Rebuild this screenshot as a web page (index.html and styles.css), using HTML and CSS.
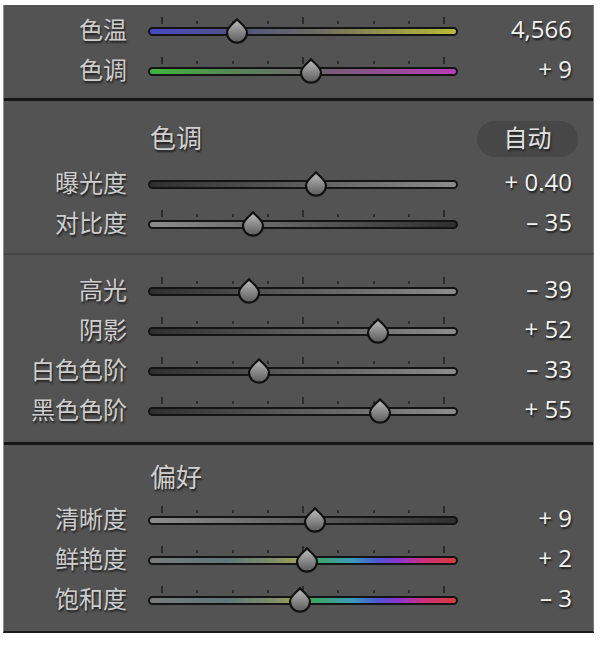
FILE: index.html
```html
<!DOCTYPE html>
<html lang="zh-CN">
<head>
    <meta charset="UTF-8">
    <title>基本调整</title>
    <link rel="stylesheet" href="styles.css">
</head>
<body>
    <!-- shared thumb shape -->
    <svg class="defs" width="0" height="0">
        <defs>
            <linearGradient id="thumb-fill" x1="0" y1="0" x2="0" y2="1">
                <stop offset="0" stop-color="#c0c0c0"/>
                <stop offset="0.55" stop-color="#878787"/>
                <stop offset="1" stop-color="#5c5c5c"/>
            </linearGradient>
            <symbol id="drop" viewBox="0 0 24 26">
                <path d="M12 1.2 C15 5 22 9 22 14.6 A10 10 0 0 1 2 14.6 C2 9 9 5 12 1.2 Z"
                      fill="url(#thumb-fill)" stroke="#111" stroke-width="2.2" stroke-linejoin="round"/>
            </symbol>
        </defs>
    </svg>

    <div class="panel">
        <div class="section section-wb">
            <div class="row">
                <span class="label">色温</span>
                <div class="slider">
                    <div class="ticks"><i class="major"></i><i></i><i></i><i></i><i class="major"></i><i></i><i></i><i></i><i class="major"></i></div>
                    <div class="track track-temp"></div>
                    <svg class="thumb" style="left: 77px"><use href="#drop"/></svg>
                </div>
                <span class="value">4,566</span>
            </div>
            <div class="row">
                <span class="label">色调</span>
                <div class="slider">
                    <div class="ticks"><i class="major"></i><i></i><i></i><i></i><i class="major"></i><i></i><i></i><i></i><i class="major"></i></div>
                    <div class="track track-tint"></div>
                    <svg class="thumb" style="left: 151px"><use href="#drop"/></svg>
                </div>
                <span class="value">+ 9</span>
            </div>
        </div>

        <div class="section section-tone">
            <div class="section-head">
                <span class="section-title">色调</span>
                <button class="auto-button">自动</button>
            </div>
            <div class="row">
                <span class="label">曝光度</span>
                <div class="slider">
                    <div class="track track-up"></div>
                    <svg class="thumb" style="left: 156px"><use href="#drop"/></svg>
                </div>
                <span class="value">+ 0.40</span>
            </div>
            <div class="row">
                <span class="label">对比度</span>
                <div class="slider">
                    <div class="ticks"><i class="major"></i><i></i><i></i><i></i><i class="major"></i><i></i><i></i><i></i><i class="major"></i></div>
                    <div class="track track-down"></div>
                    <svg class="thumb" style="left: 93px"><use href="#drop"/></svg>
                </div>
                <span class="value">– 35</span>
            </div>
        </div>

        <div class="section section-levels">
            <div class="row">
                <span class="label">高光</span>
                <div class="slider">
                    <div class="ticks"><i class="major"></i><i></i><i></i><i></i><i class="major"></i><i></i><i></i><i></i><i class="major"></i></div>
                    <div class="track track-up"></div>
                    <svg class="thumb" style="left: 89px"><use href="#drop"/></svg>
                </div>
                <span class="value">– 39</span>
            </div>
            <div class="row">
                <span class="label">阴影</span>
                <div class="slider">
                    <div class="ticks"><i class="major"></i><i></i><i></i><i></i><i class="major"></i><i></i><i></i><i></i><i class="major"></i></div>
                    <div class="track track-up"></div>
                    <svg class="thumb" style="left: 218px"><use href="#drop"/></svg>
                </div>
                <span class="value">+ 52</span>
            </div>
            <div class="row">
                <span class="label">白色色阶</span>
                <div class="slider">
                    <div class="ticks"><i class="major"></i><i></i><i></i><i></i><i class="major"></i><i></i><i></i><i></i><i class="major"></i></div>
                    <div class="track track-up"></div>
                    <svg class="thumb" style="left: 99px"><use href="#drop"/></svg>
                </div>
                <span class="value">– 33</span>
            </div>
            <div class="row">
                <span class="label">黑色色阶</span>
                <div class="slider">
                    <div class="ticks"><i class="major"></i><i></i><i></i><i></i><i class="major"></i><i></i><i></i><i></i><i class="major"></i></div>
                    <div class="track track-up"></div>
                    <svg class="thumb" style="left: 220px"><use href="#drop"/></svg>
                </div>
                <span class="value">+ 55</span>
            </div>
        </div>

        <div class="section section-presence">
            <div class="section-head">
                <span class="section-title">偏好</span>
            </div>
            <div class="row">
                <span class="label">清晰度</span>
                <div class="slider">
                    <div class="ticks"><i class="major"></i><i></i><i></i><i></i><i class="major"></i><i></i><i></i><i></i><i class="major"></i></div>
                    <div class="track track-down"></div>
                    <svg class="thumb" style="left: 155px"><use href="#drop"/></svg>
                </div>
                <span class="value">+ 9</span>
            </div>
            <div class="row">
                <span class="label">鲜艳度</span>
                <div class="slider">
                    <div class="ticks"><i class="major"></i><i></i><i></i><i></i><i class="major"></i><i></i><i></i><i></i><i class="major"></i></div>
                    <div class="track track-color"></div>
                    <svg class="thumb" style="left: 147px"><use href="#drop"/></svg>
                </div>
                <span class="value">+ 2</span>
            </div>
            <div class="row">
                <span class="label">饱和度</span>
                <div class="slider">
                    <div class="ticks"><i class="major"></i><i></i><i></i><i></i><i class="major"></i><i></i><i></i><i></i><i class="major"></i></div>
                    <div class="track track-color"></div>
                    <svg class="thumb" style="left: 140px"><use href="#drop"/></svg>
                </div>
                <span class="value">– 3</span>
            </div>
        </div>
    </div>
</body>
</html>
```

FILE: styles.css
```css
* {
    margin: 0;
    padding: 0;
    box-sizing: border-box;
}

body {
    background: #fff;
    font-family: "Noto Sans CJK SC", sans-serif;
}

.defs {
    position: absolute;
}

.panel {
    width: 591px;
    margin: 5px 0 0 3px;
    background: #535353;
    border-left: 1px solid #8c8c8c;
    border-right: 1px solid #7a7a7a;
    border-bottom: 2px solid #1a1a1a;
}

.section-wb {
    padding: 6px 0 7px;
    border-bottom: 3px solid #151515;
}

.section-tone {
    padding: 18px 0 9px;
    border-bottom: 2px solid #444;
}

.section-levels {
    padding: 16px 0 11px;
    border-bottom: 3px solid #151515;
}

.section-presence {
    padding: 13px 0 11px;
}

.section-head {
    height: 40px;
    display: flex;
    align-items: center;
    padding: 0 15px 0 146px;
    margin-bottom: 5px;
}

.section-presence .section-head {
    margin-bottom: 2px;
}

.section-title {
    font-size: 26px;
    line-height: 34px;
    padding-bottom: 4px;
    color: #cfcfcf;
    text-shadow: 1px 2px 2px rgba(0, 0, 0, 0.65);
}

.auto-button {
    margin-left: auto;
    width: 101px;
    height: 36px;
    border: none;
    border-radius: 18px;
    background: #474747;
    color: #e2e2e2;
    font-family: "Noto Sans CJK SC", sans-serif;
    font-size: 24px;
    line-height: 32px;
    padding-bottom: 4px;
    text-shadow: 1px 2px 2px rgba(0, 0, 0, 0.6);
}

.row {
    height: 40px;
    display: grid;
    grid-template-columns: 123px 310px 1fr;
    column-gap: 21px;
    align-items: center;
    padding-right: 21px;
}

.label {
    text-align: right;
    font-size: 24px;
    line-height: 32px;
    padding-bottom: 4px;
    color: #cdcdcd;
    text-shadow: 1px 2px 2px rgba(0, 0, 0, 0.65);
    white-space: nowrap;
}

.value {
    text-align: right;
    font-family: "Open Sans", sans-serif;
    font-size: 24px;
    line-height: 32px;
    padding-bottom: 5px;
    color: #f2f2f2;
    text-shadow: 1px 2px 2px rgba(0, 0, 0, 0.7);
    white-space: nowrap;
}

.slider {
    position: relative;
    height: 40px;
}

.ticks {
    position: absolute;
    left: 13px;
    right: 13px;
    top: 6px;
    height: 7px;
    display: flex;
    justify-content: space-between;
    align-items: flex-end;
}

.ticks i {
    width: 2px;
    height: 3px;
    background: #2c2c2c;
}

.ticks i.major {
    height: 7px;
}

.track {
    position: absolute;
    left: 0;
    right: 0;
    top: 16px;
    height: 9px;
    border: 2px solid #141414;
    border-radius: 5px;
}

.track-temp {
    background: linear-gradient(to right, #4848c8 0%, #55557e 30%, #6c6c62 55%, #9a9a48 80%, #b9b93a 100%);
}

.track-tint {
    background: linear-gradient(to right, #3db63d 0%, #588258 30%, #745e74 58%, #9a4a9a 80%, #b73cb7 100%);
}

.track-up {
    background: linear-gradient(to right, #2f2f2f, #8c8c8c);
}

.track-down {
    background: linear-gradient(to right, #8c8c8c, #2f2f2f);
}

.track-color {
    background: linear-gradient(to right,
        #7a7a7a 0%, #5c7878 25%, #7e8c68 40%, #a0a058 49%,
        #3ea45e 53%, #3a9cb8 66%, #4a5ad2 74%, #8a34cc 81%,
        #c8307e 89%, #d83c3c 100%);
}

.thumb {
    position: absolute;
    top: 7px;
    width: 24px;
    height: 26px;
}
```
